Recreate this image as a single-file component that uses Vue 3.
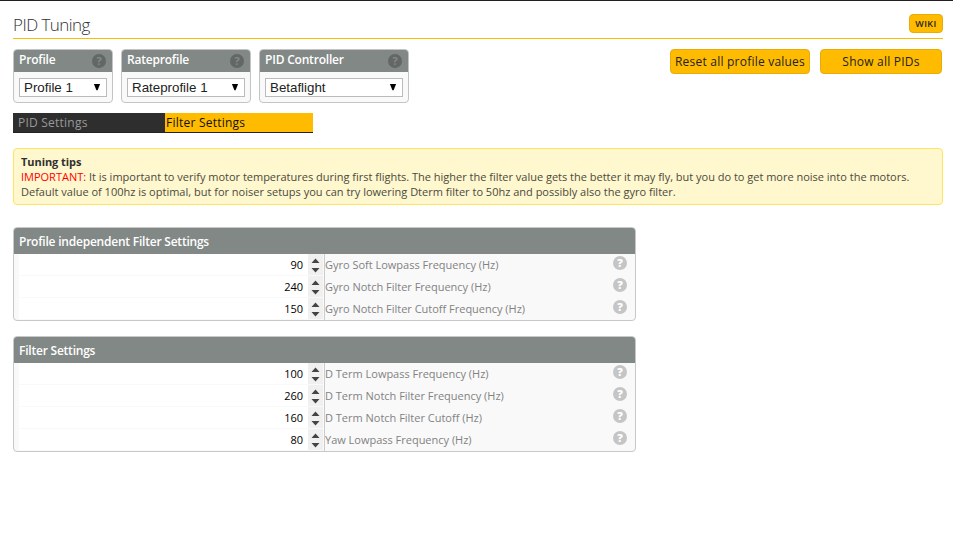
<script setup>
const selectors = [
  { title: 'Profile', value: 'Profile 1', cls: 'w-profile' },
  { title: 'Rateprofile', value: 'Rateprofile 1', cls: 'w-rate' },
  { title: 'PID Controller', value: 'Betaflight', cls: 'w-controller' },
]

const groups = [
  {
    title: 'Profile independent Filter Settings',
    rows: [
      { value: 90, label: 'Gyro Soft Lowpass Frequency (Hz)' },
      { value: 240, label: 'Gyro Notch Filter Frequency (Hz)' },
      { value: 150, label: 'Gyro Notch Filter Cutoff Frequency (Hz)' },
    ],
  },
  {
    title: 'Filter Settings',
    rows: [
      { value: 100, label: 'D Term Lowpass Frequency (Hz)' },
      { value: 260, label: 'D Term Notch Filter Frequency (Hz)' },
      { value: 160, label: 'D Term Notch Filter Cutoff (Hz)' },
      { value: 80, label: 'Yaw Lowpass Frequency (Hz)' },
    ],
  },
]
</script>

<template>
  <main class="page">
    <header class="title-bar">
      <h1>PID Tuning</h1>
      <button class="wiki">WIKI</button>
    </header>

    <div class="toolbar">
      <section v-for="s in selectors" :key="s.title" class="picker" :class="s.cls">
        <div class="picker-head">
          <span>{{ s.title }}</span>
          <i class="help dark">?</i>
        </div>
        <div class="picker-body">
          <div class="select">
            <span>{{ s.value }}</span>
            <svg width="8" height="7" viewBox="0 0 8 7"><path d="M0.9 0h6.2L4.6 6.2h-1.2z" fill="#000" /></svg>
          </div>
        </div>
      </section>
      <div class="actions">
        <button class="action reset"><span>Reset all profile values</span></button>
        <button class="action show"><span>Show all PIDs</span></button>
      </div>
    </div>

    <nav class="tabs">
      <a class="tab">PID Settings</a>
      <a class="tab active">Filter Settings</a>
    </nav>

    <div class="note">
      <strong>Tuning tips</strong>
      <p class="line1"><span class="red">IMPORTANT:</span> It is important to verify motor temperatures during first flights. The higher the filter value gets the better it may fly, but you do to get more noise into the motors.</p>
      <p class="line2">Default value of 100hz is optimal, but for noiser setups you can try lowering Dterm filter to 50hz and possibly also the gyro filter.</p>
    </div>

    <section v-for="g in groups" :key="g.title" class="group">
      <h2>{{ g.title }}</h2>
      <div v-for="r in g.rows" :key="r.label" class="row">
        <div class="cell">
          <div class="number">
            <span class="value">{{ r.value }}</span>
            <span class="spinner">
              <svg width="15" height="21" viewBox="0 0 15 21">
                <path d="M7.5 4.6L11.5 9H3.5z M3.5 14H11.5L7.5 18.4z" fill="#444" />
              </svg>
            </span>
          </div>
        </div>
        <span class="label">{{ r.label }}</span>
        <i class="help light">?</i>
      </div>
    </section>
  </main>
</template>

<style>
body {
  background: #fff;
}
</style>

<style scoped>
.page {
  box-sizing: border-box;
  height: 533px;
  padding: 0 10px 0 13px;
  border-top: 1px solid #231f20;
  font-family: "Open Sans", "Noto Sans", sans-serif;
  font-size: 12px;
  color: #303030;
}
.title-bar {
  box-sizing: border-box;
  display: flex;
  justify-content: space-between;
  align-items: flex-start;
  height: 38px;
  padding-top: 13px;
  border-bottom: 1px solid #ffbb00;
}
h1 {
  margin: 0;
  font-size: 17px;
  font-weight: 300;
  line-height: 22px;
  letter-spacing: -0.55px;
  color: #303030;
}
button {
  box-sizing: border-box;
  padding: 0;
  border: 1px solid #e8ab08;
  border-radius: 4px;
  background: #ffbb00;
  font-family: inherit;
  color: #222;
  white-space: nowrap;
}
.wiki {
  width: 34px;
  height: 19px;
  font-size: 9px;
  font-weight: 600;
  line-height: 17px;
  letter-spacing: 0.4px;
}
.toolbar {
  display: flex;
  gap: 8px;
  margin-top: 10px;
  height: 54px;
}
.picker {
  box-sizing: border-box;
  border: 1px solid #c4c4c4;
  border-radius: 4px;
  background: #f9f9f9;
  overflow: hidden;
}
.w-profile { width: 100px; }
.w-rate { width: 130px; }
.w-controller { width: 150px; }
.picker-head {
  display: flex;
  justify-content: space-between;
  height: 23px;
  margin: -1px -1px 0;
  padding: 0 7px 0 6px;
  background: #828885;
  font-weight: 600;
  line-height: 21px;
  letter-spacing: -0.2px;
  color: #fff;
}
.help {
  flex: none;
  width: 14px;
  height: 14px;
  border-radius: 50%;
  font-size: 11px;
  font-style: normal;
  font-weight: 800;
  line-height: 14px;
  letter-spacing: 0;
  text-align: center;
}
.help.dark {
  margin-top: 5px;
  background: #636765;
  color: #858a87;
  font-weight: 700;
}
.help.light {
  background: #c5c5c5;
  color: #fff;
}
.picker-body {
  padding: 6px 5px 0;
}
.select {
  box-sizing: border-box;
  display: flex;
  align-items: center;
  justify-content: space-between;
  height: 19px;
  padding: 0 5px 0 4px;
  border: 1px solid #bbb;
  background: #fff;
  font-family: "Liberation Sans", Arial, sans-serif;
  font-size: 13.333px;
  line-height: 17px;
  color: #222;
}
.actions {
  display: flex;
  gap: 10px;
  margin-left: auto;
  padding-right: 1px;
}
.action {
  height: 25px;
  font-size: 12px;
  line-height: 23px;
  letter-spacing: 0.22px;
}
.reset { width: 140px; }
.show { width: 122px; }
.tabs {
  box-sizing: border-box;
  display: flex;
  width: 300px;
  height: 20px;
  margin-top: 10px;
  border-bottom: 1px solid #222;
  background: #2e2e2e;
}
.tab {
  box-sizing: border-box;
  width: 152px;
  padding-left: 5px;
  font-size: 12px;
  line-height: 19px;
  letter-spacing: 0.23px;
  color: #999;
}
.tab.active {
  width: 148px;
  padding-left: 1px;
  background: #ffbb00;
  color: #111;
}
.note {
  box-sizing: border-box;
  height: 57px;
  margin-top: 15px;
  padding: 5px 7px;
  border: 1px solid #ffe55f;
  border-radius: 4px;
  background: #fff7cd;
  font-size: 11px;
  line-height: 15px;
  color: #4a4a40;
  white-space: nowrap;
}
.note strong {
  display: block;
  font-weight: 700;
  letter-spacing: -0.06px;
  color: #303030;
}
.note p {
  margin: 0;
}
.note .line1 {
  letter-spacing: -0.008px;
}
.red {
  color: #f00;
}
.group {
  box-sizing: border-box;
  width: 623px;
  margin-top: 22px;
  border: 1px solid #c8c8c8;
  border-radius: 4px;
  background: #f9f9f9;
  overflow: hidden;
}
.group + .group {
  margin-top: 15px;
}
h2 {
  box-sizing: border-box;
  height: 26px;
  margin: 0;
  padding: 1px 0 0 5px;
  background: #828885;
  font-size: 12px;
  font-weight: 600;
  line-height: 26px;
  letter-spacing: -0.22px;
  color: #fff;
}
.row {
  display: flex;
  height: 22px;
}
.cell {
  box-sizing: border-box;
  width: 311px;
  padding-left: 5px;
  border-right: 1px solid #ccc;
}
.number {
  display: flex;
  justify-content: flex-end;
  width: 304px;
  height: 21px;
  background: #fff;
}
.value {
  padding-right: 5px;
  font-size: 11px;
  font-weight: 500;
  line-height: 22px;
  color: #000;
}
.spinner {
  width: 15px;
  height: 21px;
  background: #f0f0f0;
}
.spinner svg {
  display: block;
}
.label {
  flex: 1;
  font-size: 11px;
  line-height: 22px;
  letter-spacing: -0.01px;
  color: #828282;
}
.row .help {
  margin: 2px 8px 0 0;
}
</style>
